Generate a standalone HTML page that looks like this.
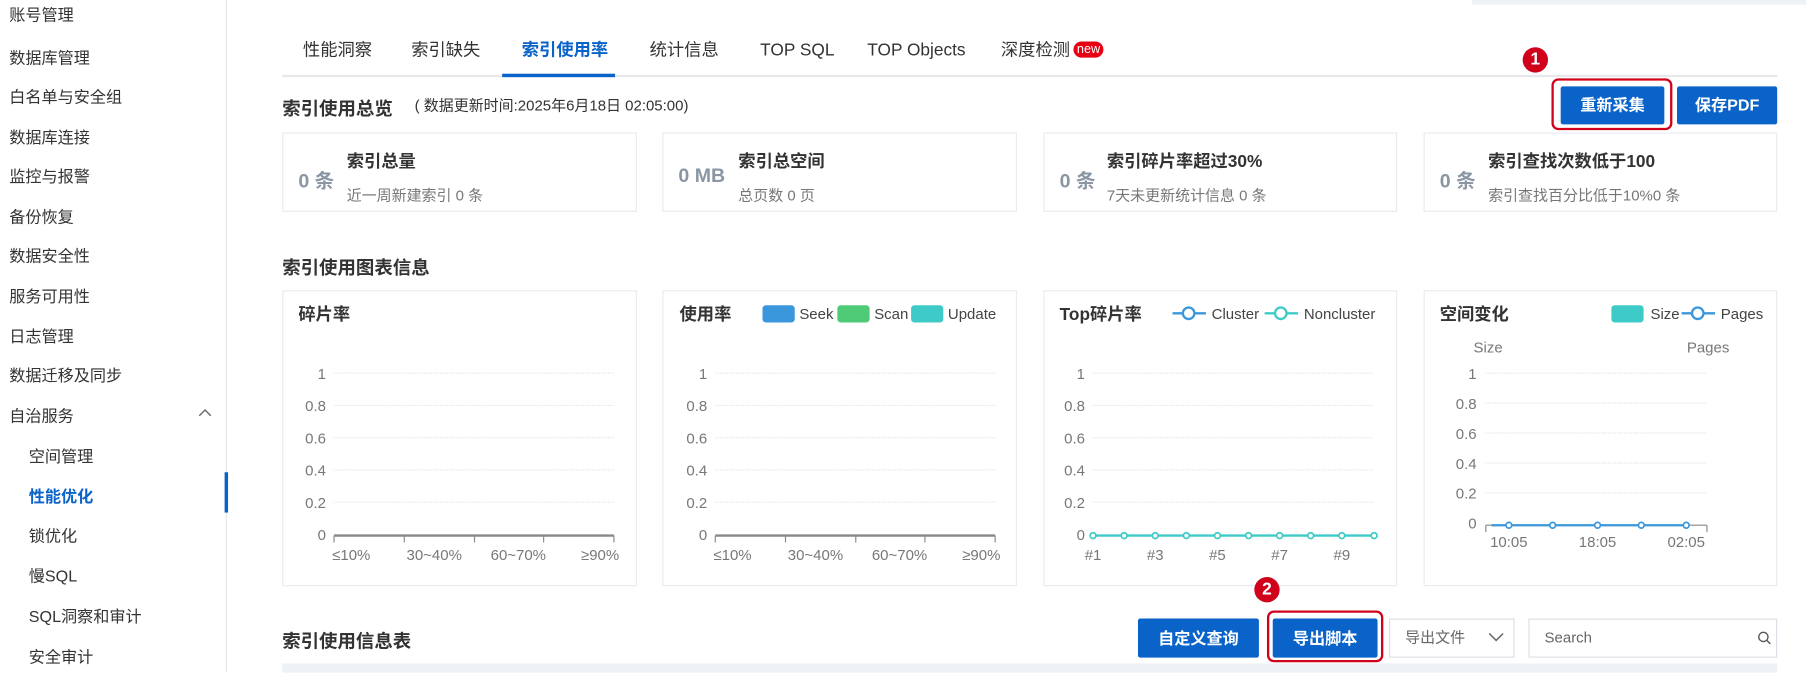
<!DOCTYPE html>
<html><head><meta charset="utf-8"><style>
*{margin:0;padding:0;box-sizing:border-box}
body{width:1806px;height:672px;overflow:hidden;background:#fff;font-family:"Liberation Sans","Noto Sans CJK SC",sans-serif;color:#333;position:relative}
#w{position:absolute;left:0;top:0;width:1568px;height:584px;transform:scale(1.15179);transform-origin:0 0}
.a{position:absolute;white-space:nowrap}
.side{left:0;top:0;width:197px;height:584px;border-right:1px solid #e4e7ec}
.si{position:absolute;font-size:14px;color:#333;line-height:20px}
.card{position:absolute;border:1px solid #e8ebf0;background:#fff}
.btn{position:absolute;background:#0a63c9;color:#fff;font-weight:bold;font-size:14px;text-align:center;border-radius:2px}
.red{position:absolute;border:2px solid #d0021b;border-radius:6px}
.dot{position:absolute;width:22px;height:22px;border-radius:50%;background:#d0021b;color:#fff;font-weight:bold;font-size:15px;text-align:center;line-height:22px}
h3{position:absolute;font-size:16px;font-weight:bold;color:#333;white-space:nowrap}
</style></head><body><div id="w">
<div class="a side"></div>
<div class="a" style="left:195px;top:410px;width:3px;height:35px;background:#0a63c9"></div>
<div class="si" style="left:8px;top:3px">账号管理</div>
<div class="si" style="left:8px;top:40px">数据库管理</div>
<div class="si" style="left:8px;top:74px">白名单与安全组</div>
<div class="si" style="left:8px;top:109px">数据库连接</div>
<div class="si" style="left:8px;top:143px">监控与报警</div>
<div class="si" style="left:8px;top:178px">备份恢复</div>
<div class="si" style="left:8px;top:212px">数据安全性</div>
<div class="si" style="left:8px;top:247px">服务可用性</div>
<div class="si" style="left:8px;top:282px">日志管理</div>
<div class="si" style="left:8px;top:316px">数据迁移及同步</div>
<div class="si" style="left:8px;top:351px">自治服务</div>
<svg class="a" style="left:172px;top:354px" width="12" height="10"><path d="M1 7 L6 2 L11 7" stroke="#666" fill="none" stroke-width="1.2"/></svg>
<div class="si" style="left:25px;top:386px">空间管理</div>
<div class="si" style="left:25px;top:421px;color:#0a63c9;font-weight:bold">性能优化</div>
<div class="si" style="left:25px;top:455px">锁优化</div>
<div class="si" style="left:25px;top:490px">慢SQL</div>
<div class="si" style="left:25px;top:525px">SQL洞察和审计</div>
<div class="si" style="left:25px;top:560px">安全审计</div>

<div class="a" style="left:1278px;top:0;width:290px;height:4px;background:#eef1f6"></div>

<div class="a" style="left:245px;top:65px;width:1298px;height:2px;background:#e6e8ec"></div>
<div class="a" style="left:436px;top:64px;width:98px;height:3px;background:#0a63c9"></div>
<div class="a" style="left:263px;top:34px;font-size:15px;line-height:20px">性能洞察</div>
<div class="a" style="left:357px;top:34px;font-size:15px;line-height:20px">索引缺失</div>
<div class="a" style="left:453px;top:34px;font-size:15px;line-height:20px;color:#0a63c9;font-weight:bold">索引使用率</div>
<div class="a" style="left:564px;top:34px;font-size:15px;line-height:20px">统计信息</div>
<div class="a" style="left:660px;top:34px;font-size:15px;line-height:20px">TOP SQL</div>
<div class="a" style="left:753px;top:34px;font-size:15px;line-height:20px">TOP Objects</div>
<div class="a" style="left:869px;top:34px;font-size:15px;line-height:20px">深度检测</div>
<div class="a" style="left:932px;top:36px;background:#e60012;color:#fff;font-size:11px;border-radius:8px;padding:0 3px;line-height:14px">new</div>

<h3 style="left:245px;top:81px">索引使用总览</h3>
<div class="a" style="left:360px;top:83px;font-size:13px;line-height:18px">( 数据更新时间:2025年6月18日 02:05:00)</div>
<div class="red" style="left:1347px;top:68px;width:105px;height:45px"></div>
<div class="dot" style="left:1322px;top:41px">1</div>
<div class="btn" style="left:1355px;top:75px;width:90px;height:33px;line-height:33px">重新采集</div>
<div class="btn" style="left:1456px;top:75px;width:87px;height:33px;line-height:33px">保存PDF</div>

<div class="card" style="left:245px;top:115px;width:308px;height:69px"></div>
<div class="card" style="left:575px;top:115px;width:308px;height:69px"></div>
<div class="card" style="left:906px;top:115px;width:307px;height:69px"></div>
<div class="card" style="left:1236px;top:115px;width:307px;height:69px"></div>
<div class="a" style="left:259px;top:143px;font-size:17px;font-weight:bold;color:#8a96a3">0 条</div>
<div class="a" style="left:589px;top:143px;font-size:17px;font-weight:bold;color:#8a96a3">0 MB</div>
<div class="a" style="left:920px;top:143px;font-size:17px;font-weight:bold;color:#8a96a3">0 条</div>
<div class="a" style="left:1250px;top:143px;font-size:17px;font-weight:bold;color:#8a96a3">0 条</div>
<div class="a" style="left:301px;top:129px;font-size:15px;font-weight:bold">索引总量</div>
<div class="a" style="left:641px;top:129px;font-size:15px;font-weight:bold">索引总空间</div>
<div class="a" style="left:961px;top:129px;font-size:15px;font-weight:bold">索引碎片率超过30%</div>
<div class="a" style="left:1292px;top:129px;font-size:15px;font-weight:bold">索引查找次数低于100</div>
<div class="a" style="left:301px;top:159px;font-size:13px;color:#777">近一周新建索引 0 条</div>
<div class="a" style="left:641px;top:159px;font-size:13px;color:#777">总页数 0 页</div>
<div class="a" style="left:961px;top:159px;font-size:13px;color:#777">7天未更新统计信息 0 条</div>
<div class="a" style="left:1292px;top:159px;font-size:13px;color:#777">索引查找百分比低于10%0 条</div>

<h3 style="left:245px;top:219px">索引使用图表信息</h3>
<div class="card" style="left:245px;top:252px;width:308px;height:257px"></div>
<div class="card" style="left:575px;top:252px;width:308px;height:257px"></div>
<div class="card" style="left:906px;top:252px;width:307px;height:257px"></div>
<div class="card" style="left:1236px;top:252px;width:307px;height:257px"></div>

<svg class="a" style="left:0;top:0" width="1568" height="584" font-family="Liberation Sans,Noto Sans CJK SC,sans-serif">
<g font-size="15" font-weight="bold" fill="#333">
<text x="259" y="278">碎片率</text><text x="590" y="278">使用率</text><text x="920" y="278">Top碎片率</text><text x="1250" y="278">空间变化</text></g>
<g font-size="13" fill="#444">
<rect x="662" y="265" width="28" height="15" rx="3" fill="#3a97dc"/><text x="694" y="277">Seek</text>
<rect x="727" y="265" width="28" height="15" rx="3" fill="#4fcb77"/><text x="759" y="277">Scan</text>
<rect x="791" y="265" width="28" height="15" rx="3" fill="#3ecbc8"/><text x="823" y="277">Update</text>
<line x1="1018" y1="272" x2="1047" y2="272" stroke="#3a97dc" stroke-width="2"/><circle cx="1032" cy="272" r="5" fill="#fff" stroke="#3a97dc" stroke-width="2"/><text x="1052" y="277">Cluster</text>
<line x1="1098" y1="272" x2="1127" y2="272" stroke="#3ecbc8" stroke-width="2"/><circle cx="1112" cy="272" r="5" fill="#fff" stroke="#3ecbc8" stroke-width="2"/><text x="1132" y="277">Noncluster</text>
<rect x="1399" y="265" width="28" height="15" rx="3" fill="#3ecbc8"/><text x="1433" y="277">Size</text>
<line x1="1460" y1="272" x2="1489" y2="272" stroke="#3a97dc" stroke-width="2"/><circle cx="1474" cy="272" r="5" fill="#fff" stroke="#3a97dc" stroke-width="2"/><text x="1494" y="277">Pages</text>
</g>
<g font-size="13" fill="#777" text-anchor="end">
<text x="283" y="329">1</text><text x="283" y="357">0.8</text><text x="283" y="385">0.6</text><text x="283" y="413">0.4</text><text x="283" y="441">0.2</text><text x="283" y="469">0</text>
<text x="614" y="329">1</text><text x="614" y="357">0.8</text><text x="614" y="385">0.6</text><text x="614" y="413">0.4</text><text x="614" y="441">0.2</text><text x="614" y="469">0</text>
<text x="942" y="329">1</text><text x="942" y="357">0.8</text><text x="942" y="385">0.6</text><text x="942" y="413">0.4</text><text x="942" y="441">0.2</text><text x="942" y="469">0</text>
<text x="1282" y="329">1</text><text x="1282" y="355">0.8</text><text x="1282" y="381">0.6</text><text x="1282" y="407">0.4</text><text x="1282" y="433">0.2</text><text x="1282" y="459">0</text>
</g>
<g stroke="#e0e3ee" stroke-dasharray="1,1">
<line x1="290" y1="324" x2="533" y2="324"/><line x1="290" y1="352" x2="533" y2="352"/><line x1="290" y1="380" x2="533" y2="380"/><line x1="290" y1="408" x2="533" y2="408"/><line x1="290" y1="436" x2="533" y2="436"/>
<line x1="621" y1="324" x2="864" y2="324"/><line x1="621" y1="352" x2="864" y2="352"/><line x1="621" y1="380" x2="864" y2="380"/><line x1="621" y1="408" x2="864" y2="408"/><line x1="621" y1="436" x2="864" y2="436"/>
<line x1="949" y1="324" x2="1193" y2="324"/><line x1="949" y1="352" x2="1193" y2="352"/><line x1="949" y1="380" x2="1193" y2="380"/><line x1="949" y1="408" x2="1193" y2="408"/><line x1="949" y1="436" x2="1193" y2="436"/>
<line x1="1290" y1="324" x2="1482" y2="324"/><line x1="1290" y1="350" x2="1482" y2="350"/><line x1="1290" y1="376" x2="1482" y2="376"/><line x1="1290" y1="402" x2="1482" y2="402"/><line x1="1290" y1="428" x2="1482" y2="428"/>
</g>
<g stroke="#888" stroke-width="1">
<line x1="290" y1="465" x2="533" y2="465" stroke-width="2"/><line x1="290" y1="465" x2="290" y2="471"/><line x1="351" y1="465" x2="351" y2="471"/><line x1="412" y1="465" x2="412" y2="471"/><line x1="472" y1="465" x2="472" y2="471"/><line x1="533" y1="465" x2="533" y2="471"/>
<line x1="621" y1="465" x2="864" y2="465" stroke-width="2"/><line x1="621" y1="465" x2="621" y2="471"/><line x1="682" y1="465" x2="682" y2="471"/><line x1="743" y1="465" x2="743" y2="471"/><line x1="803" y1="465" x2="803" y2="471"/><line x1="864" y1="465" x2="864" y2="471"/>
<line x1="1290" y1="456" x2="1290" y2="462"/><line x1="1290" y1="456" x2="1482" y2="456"/><line x1="1482" y1="456" x2="1482" y2="462"/>
</g>
<g font-size="13" fill="#777" text-anchor="middle">
<text x="305" y="486">≤10%</text><text x="377" y="486">30~40%</text><text x="450" y="486">60~70%</text><text x="521" y="486">≥90%</text>
<text x="636" y="486">≤10%</text><text x="708" y="486">30~40%</text><text x="781" y="486">60~70%</text><text x="852" y="486">≥90%</text>
<text x="949" y="486">#1</text><text x="1003" y="486">#3</text><text x="1057" y="486">#5</text><text x="1111" y="486">#7</text><text x="1165" y="486">#9</text>
<text x="1310" y="475">10:05</text><text x="1387" y="475">18:05</text><text x="1464" y="475">02:05</text>
<text x="1292" y="306">Size</text><text x="1483" y="306">Pages</text>
</g>
<line x1="949" y1="465" x2="1193" y2="465" stroke="#3ecbc8" stroke-width="2"/>
<g fill="#fff" stroke="#3ecbc8" stroke-width="1.5">
<circle cx="949" cy="465" r="2.5"/><circle cx="976" cy="465" r="2.5"/><circle cx="1003" cy="465" r="2.5"/><circle cx="1030" cy="465" r="2.5"/><circle cx="1057" cy="465" r="2.5"/><circle cx="1084" cy="465" r="2.5"/><circle cx="1111" cy="465" r="2.5"/><circle cx="1138" cy="465" r="2.5"/><circle cx="1165" cy="465" r="2.5"/><circle cx="1193" cy="465" r="2.5"/></g>
<line x1="1295" y1="456" x2="1464" y2="456" stroke="#3a97dc" stroke-width="2"/>
<g fill="#fff" stroke="#3a97dc" stroke-width="1.5">
<circle cx="1310" cy="456" r="2.5"/><circle cx="1348" cy="456" r="2.5"/><circle cx="1387" cy="456" r="2.5"/><circle cx="1425" cy="456" r="2.5"/><circle cx="1464" cy="456" r="2.5"/></g>
</svg>

<h3 style="left:245px;top:543px">索引使用信息表</h3>
<div class="btn" style="left:988px;top:537px;width:105px;height:34px;line-height:34px">自定义查询</div>
<div class="red" style="left:1100px;top:530px;width:101px;height:45px"></div>
<div class="dot" style="left:1089px;top:501px">2</div>
<div class="btn" style="left:1105px;top:537px;width:91px;height:34px;line-height:34px">导出脚本</div>
<div class="a" style="left:1206px;top:537px;width:109px;height:34px;border:1px solid #dcdfe6;font-size:13px;color:#666;line-height:32px;padding-left:13px">导出文件</div>
<svg class="a" style="left:1292px;top:548px" width="14" height="10"><path d="M1 2 L7 8 L13 2" stroke="#666" fill="none" stroke-width="1.3"/></svg>
<div class="a" style="left:1327px;top:537px;width:216px;height:34px;border:1px solid #dcdfe6;font-size:13px;color:#666;line-height:32px;padding-left:13px">Search</div>
<svg class="a" style="left:1526px;top:548px" width="12" height="12"><circle cx="5" cy="5" r="4" stroke="#555" fill="none" stroke-width="1.2"/><line x1="8" y1="8" x2="11" y2="11" stroke="#555" stroke-width="1.2"/></svg>
<div class="a" style="left:245px;top:576px;width:1298px;height:8px;background:#eef1f5"></div>
</div></body></html>
